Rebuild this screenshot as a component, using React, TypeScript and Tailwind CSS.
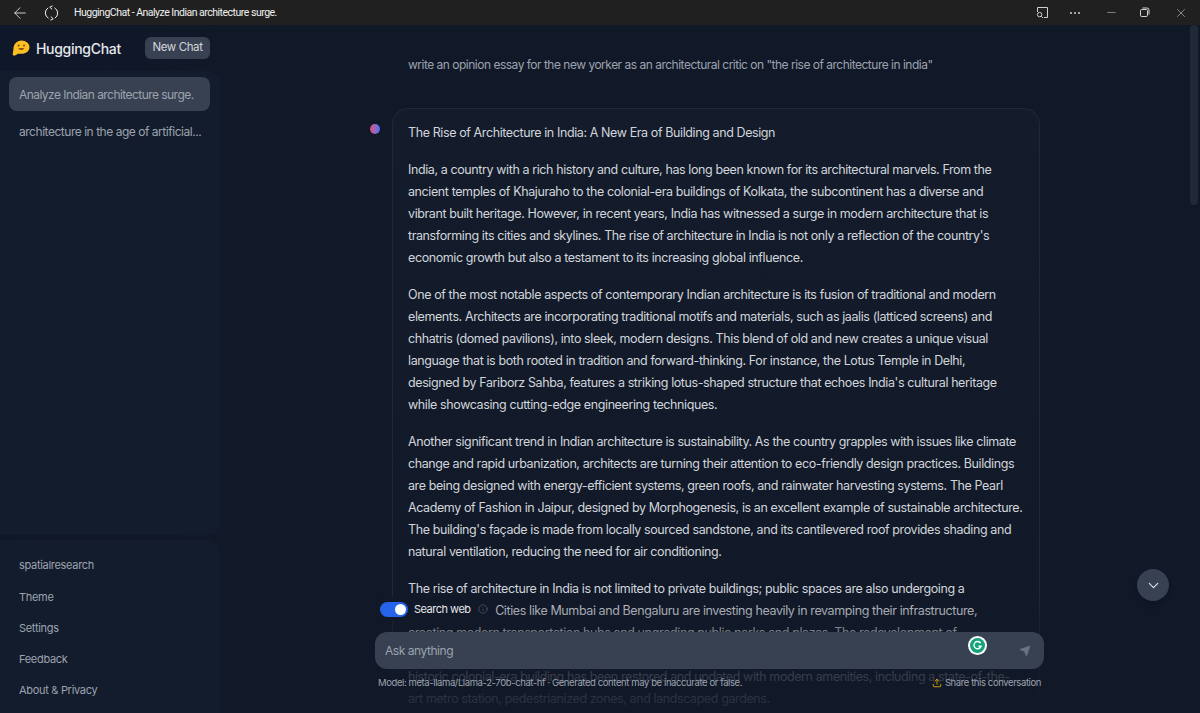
import { ArrowLeft, ChevronDown, Info, Minus, Send, Upload, X } from "lucide-react";

// line breaks the width alone doesn't reproduce are written out with \n
const paragraphs = [
  "India, a country with a rich history and culture, has long been known for its architectural marvels. From the ancient temples of Khajuraho to the colonial-era buildings of Kolkata, the subcontinent has a diverse and vibrant built heritage. However, in recent years, India has witnessed a surge in modern architecture that is transforming its cities and skylines. The rise of architecture in India is not only a reflection of the country's economic growth but also a testament to its increasing global influence.",
  "One of the most notable aspects of contemporary Indian architecture is its fusion of traditional and modern elements. Architects are incorporating traditional motifs and materials, such as jaalis (latticed screens) and chhatris (domed pavilions), into sleek, modern designs. This blend of old and new creates a unique visual language that is both rooted in tradition and forward-thinking. For instance, the Lotus Temple in Delhi,\ndesigned by Fariborz Sahba, features a striking lotus-shaped structure that echoes India's cultural heritage while showcasing cutting-edge engineering techniques.",
  "Another significant trend in Indian architecture is sustainability. As the country grapples with issues like climate change and rapid urbanization, architects are turning their attention to eco-friendly design practices. Buildings are being designed with energy-efficient systems, green roofs, and rainwater harvesting systems. The Pearl Academy of Fashion in Jaipur, designed by Morphogenesis, is an excellent example of sustainable architecture. The building's façade is made from locally sourced sandstone, and its cantilevered roof provides shading and natural ventilation, reducing the need for air conditioning.",
  "The rise of architecture in India is not limited to private buildings; public spaces are also undergoing a transformation. Cities like Mumbai and Bengaluru are investing heavily in revamping their infrastructure, creating modern transportation hubs and upgrading public parks and plazas. The redevelopment of\nChhatrapati Shivaji Terminus, a\nhistoric colonial-era building has been restored and updated with modern amenities, including a state-of-the-\nart metro station, pedestrianized zones, and landscaped gardens.",
];

const footerLinks = ["spatialresearch", "Theme", "Settings", "Feedback", "About & Privacy"];

function TitleBar() {
  return (
    <div className="flex h-[25px] shrink-0 items-center bg-[#202020] text-[#f0f0f0]">
      <ArrowLeft size={18} strokeWidth={1.1} className="ml-[11px]" />
      <svg width="15" height="16" viewBox="0 0 15 16" fill="none" stroke="currentColor" strokeWidth="1" className="ml-[15px]">
        <path d="M4.2 2.8A6 6 0 0 0 4.5 13.2" />
        <path d="M10.8 13.2A6 6 0 0 0 10.5 2.8" />
        <path d="M8.6 0.8L5.8 2.2 8.2 4.4" />
        <path d="M6.4 15.2L9.2 13.8 6.8 11.6" />
      </svg>
      <span className="ml-[15px] font-['Roboto',sans-serif] text-[10.5px] tracking-[-0.5px]">
        HuggingChat - Analyze Indian architecture surge.
      </span>
      <div className="ml-auto flex items-center text-[#d0d0d0]">
        <svg width="13" height="13" viewBox="0 0 13 13" fill="none" stroke="currentColor" strokeWidth="1">
          <path d="M1.5 6V1.5h10v10H8" />
          <circle cx="3.6" cy="8.6" r="2.2" />
          <path d="M5.2 10.2l1.8 1.8" />
        </svg>
        <span className="ml-[21px] flex gap-[2px]">
          <i className="h-[2px] w-[2px] rounded-full bg-current" />
          <i className="h-[2px] w-[2px] rounded-full bg-current" />
          <i className="h-[2px] w-[2px] rounded-full bg-current" />
        </span>
        <Minus size={13} strokeWidth={1} className="ml-[25px]" />
        <svg width="11" height="11" viewBox="0 0 11 11" fill="none" stroke="currentColor" strokeWidth="1" className="ml-[21px]">
          <rect x="1.5" y="2.5" width="7" height="7" rx="1.2" />
          <path d="M3.5 1h4.5A2 2 0 0 1 10 3v4.5" />
        </svg>
        <X size={14} strokeWidth={1} className="ml-[24px] mr-[12px]" />
      </div>
    </div>
  );
}

function Logo() {
  return (
    <svg width="18" height="16" viewBox="0 0 18 16" className="shrink-0">
      <path d="M9.5 0.5c4.5 0 8 3 8 6.7s-3.5 6.6-8 6.6H6l-3 1.7c-1.2.5-2.5-.3-2.3-1.5l.7-4.6C1.5 4 4.8.5 9.5.5z" fill="#fbbf24" />
      <circle cx="6.6" cy="5.6" r="1" fill="#7c4a12" />
      <circle cx="12" cy="5.6" r="1" fill="#7c4a12" />
      <path d="M6.4 8.3c1 2.3 4.8 2.3 5.8 0z" fill="#7c2d12" />
    </svg>
  );
}

function Sidebar() {
  return (
    <aside className="flex w-[220px] shrink-0 flex-col bg-gradient-to-l from-[#111827] to-[#0f172a]">
      <div className="flex h-[46px] items-center pl-[12px] pr-[10px]">
        <Logo />
        <span className="ml-[6px] text-[14px] font-medium tracking-[-0.3px] text-[#e5e7eb]">HuggingChat</span>
        <span className="ml-auto flex h-[22px] w-[65px] items-center justify-center rounded-md bg-[#374151] text-[11.5px] tracking-[-0.4px] text-[#d1d5db]">
          New Chat
        </span>
      </div>
      <div className="flex flex-1 flex-col rounded-r-xl bg-[#131c2c] pl-[9px] pr-[10px] pt-[6px] text-[12px] text-[#9ca3af]">
        <div className="flex h-[34px] shrink-0 items-center whitespace-nowrap rounded-lg bg-[#374151] px-[10px] pt-[1px] tracking-[-0.55px]">
          Analyze Indian architecture surge.
        </div>
        <div className="flex h-[40px] shrink-0 items-center whitespace-nowrap px-[10px] pt-[1px] tracking-[-0.47px]">
          architecture in the age of artificial...
        </div>
      </div>
      <div className="mt-[5px] flex h-[173px] shrink-0 flex-col rounded-tr-xl bg-[#131c2c] px-[19px] pt-[10px] text-[11px] tracking-[-0.3px] text-[#9ca3af]">
        {footerLinks.map((link) => (
          <span key={link} className="flex h-[31.25px] shrink-0 items-center">
            {link}
          </span>
        ))}
      </div>
    </aside>
  );
}

function Message() {
  return (
    <div className="h-full overflow-hidden pl-[172px]">
      <p className="ml-[16px] pt-[32px] text-[12px] leading-[16px] tracking-[-0.5px] text-[#9ca3af]">
        write an opinion essay for the new yorker as an architectural critic on "the rise of architecture in india"
      </p>
      <div className="relative mt-[35px] w-[648px] rounded-t-2xl border border-[#1f2937] bg-gradient-to-b from-[#141c2b] to-[#111827] px-[15px] pb-[20px] pt-[13px] text-[12.5px] leading-[22px] tracking-[-0.4px] text-[#d1d5db]">
        <span className="absolute -left-[23px] top-[15px] h-[10px] w-[10px] rounded-full bg-gradient-to-r from-[#e0447a] to-[#3b6cf6]" />
        <p>The Rise of Architecture in India: A New Era of Building and Design</p>
        {paragraphs.map((text) => (
          <p key={text} className="mt-[15px] whitespace-pre-line">
            {text}
          </p>
        ))}
      </div>
    </div>
  );
}

function Composer() {
  return (
    <div className="absolute inset-x-0 bottom-0 h-[120px] bg-gradient-to-t from-[#111827]/90 via-[#111827]/75 via-50% to-transparent">
      <div className="absolute left-[156px] top-[4px] flex h-[24px] items-center rounded-lg bg-[#111827] pl-[4px] pr-[6px]">
        <span className="flex h-[15px] w-[28px] items-center justify-end rounded-full bg-[#2563eb] pr-[2px]">
          <i className="h-[11px] w-[11px] rounded-full bg-white" />
        </span>
        <span className="ml-[6px] text-[11px] tracking-[-0.5px] text-[#e5e7eb]">Search web</span>
        <Info size={10} strokeWidth={1.3} className="ml-[7px] text-[#6b7280]" />
      </div>
      <div className="absolute left-[155px] top-[39px] flex h-[37px] w-[669px] items-center rounded-xl bg-[#374151] px-[10px] text-[12px] tracking-[-0.45px] text-[#9ca3af]">
        Ask anything
        <span className="ml-auto mr-[3px] text-[#6b7280]">
          <Send size={12} fill="currentColor" strokeWidth={1} />
        </span>
      </div>
      <div className="absolute left-[748px] top-[43px] flex h-[19px] w-[19px] items-center justify-center rounded-full bg-white">
        <span className="flex h-[15px] w-[15px] items-center justify-center rounded-full bg-[#15a37a]">
          <svg width="11" height="11" viewBox="0 0 11 11" fill="none" stroke="white" strokeWidth="1.4">
            <path d="M8.6 3.2A3.6 3.6 0 1 0 9 6.2H6.4" />
            <path d="M7.6 6.2l.9 1.6" />
          </svg>
        </span>
      </div>
      <div className="absolute left-[158px] top-[83px] flex w-[663px] items-center text-[9.5px] tracking-[-0.4px] text-[#9ca3af]">
        <span>Model: meta-llama/Llama-2-70b-chat-hf · Generated content may be inaccurate or false.</span>
        <span className="ml-auto flex items-center gap-[3px]">
          <Upload size={10} className="text-[#eab308]" />
          Share this conversation
        </span>
      </div>
    </div>
  );
}

export default function App() {
  return (
    <div className="flex h-[713px] w-[1200px] flex-col overflow-hidden bg-[#111827] font-['Inter',sans-serif]">
      <TitleBar />
      <div className="flex min-h-0 flex-1">
        <Sidebar />
        <main className="relative min-w-0 flex-1">
          <Message />
          <Composer />
          <button className="absolute left-[917px] top-[544px] flex h-[32px] w-[32px] items-center justify-center rounded-full bg-[#374151] text-[#e5e7eb] shadow-md">
            <ChevronDown size={17} strokeWidth={1.5} />
          </button>
          <div className="absolute right-[2px] top-0 h-[180px] w-[8px] rounded-full bg-[#1f2937]" />
        </main>
      </div>
    </div>
  );
}
